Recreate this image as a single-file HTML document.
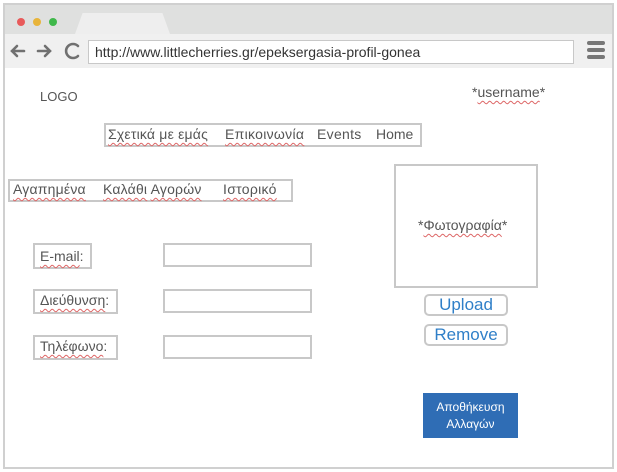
<!DOCTYPE html>
<html><head><meta charset="utf-8"><style>
body{margin:0;width:617px;height:472px;background:#fff;font-family:"Liberation Sans","Noto Sans CJK SC",sans-serif;position:relative;overflow:hidden;color:#555}
.a{position:absolute;box-sizing:border-box}
.t{position:absolute;white-space:nowrap;font-size:14px}
.b{border:2px solid #c8c8c8}
.sq{text-decoration:underline wavy #d66;text-decoration-thickness:1px;text-underline-offset:3px}
</style></head><body>
<div class="a" style="left:3px;top:3px;width:611px;height:466px;border:2px solid #d0d0d0"></div>
<div class="a" style="left:5px;top:5px;width:607px;height:29px;background:#dfe0df"></div>
<div class="a" style="left:75px;top:13px;width:95px;height:21px;background:#eeeeee;clip-path:polygon(8% 0,92% 0,100% 100%,0 100%)"></div>
<div class="a" style="left:17px;top:18px;width:8px;height:8px;border-radius:50%;background:#e85a5a"></div>
<div class="a" style="left:33px;top:18px;width:8px;height:8px;border-radius:50%;background:#e8b43a"></div>
<div class="a" style="left:49px;top:18px;width:8px;height:8px;border-radius:50%;background:#3fb84a"></div>
<div class="a" style="left:5px;top:34px;width:607px;height:34px;background:#f0f0f0"></div>
<svg class="a" style="left:8px;top:40px" width="75" height="22" viewBox="0 0 75 22"><g stroke="#707070" stroke-width="2.6" fill="none" stroke-linecap="round"><path d="M16 11H4M9 6l-5 5 5 5"/><path d="M30 11h12M37 6l5 5-5 5"/><path d="M70 6a7 7 0 1 0 0 10"/></g></svg>
<div class="a" style="left:88px;top:40px;width:486px;height:24px;border:1px solid #c8c8c8;background:#fff;font-size:14px;color:#333;padding:3px 6px">http://www.littlecherries.gr/epeksergasia-profil-gonea</div>
<div class="a" style="left:587px;top:41px;width:18px;height:4px;background:#777;border-radius:2px"></div>
<div class="a" style="left:587px;top:48px;width:18px;height:4px;background:#777;border-radius:2px"></div>
<div class="a" style="left:587px;top:55px;width:18px;height:4px;background:#777;border-radius:2px"></div>
<div class="t" style="left:40px;top:89px;font-size:13px">LOGO</div>
<div class="t" style="left:472px;top:84px">*<span class="sq">username</span>*</div>
<div class="a b" style="left:104px;top:123px;width:318px;height:24px"></div>
<div class="t" style="left:108px;top:126px;letter-spacing:.2px"><span class="sq">Σχετικά με εμάς</span></div>
<div class="t" style="left:225px;top:126px;letter-spacing:.3px"><span class="sq">Επικοινωνία</span></div>
<div class="t" style="left:317px;top:126px;letter-spacing:.3px">Events</div>
<div class="t" style="left:376px;top:126px">Home</div>
<div class="a b" style="left:8px;top:179px;width:285px;height:23px"></div>
<div class="t" style="left:13px;top:181px;letter-spacing:.2px"><span class="sq">Αγαπημένα</span></div>
<div class="t" style="left:103px;top:181px;letter-spacing:.2px"><span class="sq">Καλάθι</span> <span class="sq">Αγορών</span></div>
<div class="t" style="left:223px;top:181px;letter-spacing:.3px"><span class="sq">Ιστορικό</span></div>
<div class="a b" style="left:394px;top:164px;width:144px;height:124px"></div>
<div class="t" style="left:418px;top:217px">*<span class="sq">Φωτογραφία</span>*</div>
<div class="a b" style="left:33px;top:243px;width:59px;height:26px"></div>
<div class="t" style="left:40px;top:248px"><span class="sq">E-mail</span>:</div>
<div class="a b" style="left:33px;top:289px;width:85px;height:25px"></div>
<div class="t" style="left:40px;top:292px"><span class="sq">Διεύθυνση</span>:</div>
<div class="a b" style="left:33px;top:335px;width:85px;height:25px"></div>
<div class="t" style="left:40px;top:338px"><span class="sq">Τηλέφωνο</span>:</div>
<div class="a b" style="left:163px;top:243px;width:149px;height:24px"></div>
<div class="a b" style="left:163px;top:289px;width:149px;height:24px"></div>
<div class="a b" style="left:163px;top:335px;width:149px;height:24px"></div>
<div class="a b" style="left:424px;top:294px;width:84px;height:22px;border-radius:5px;font-size:17px;color:#2f7fc8;text-align:center;line-height:18px">Upload</div>
<div class="a b" style="left:424px;top:324px;width:84px;height:22px;border-radius:5px;font-size:17px;color:#2f7fc8;text-align:center;line-height:18px">Remove</div>
<div class="a" style="left:423px;top:393px;width:95px;height:45px;background:#2f6db5;color:#fff;font-size:12px;text-align:center;line-height:17px;padding-top:6px">Αποθήκευση<br>Αλλαγών</div>
</body></html>
